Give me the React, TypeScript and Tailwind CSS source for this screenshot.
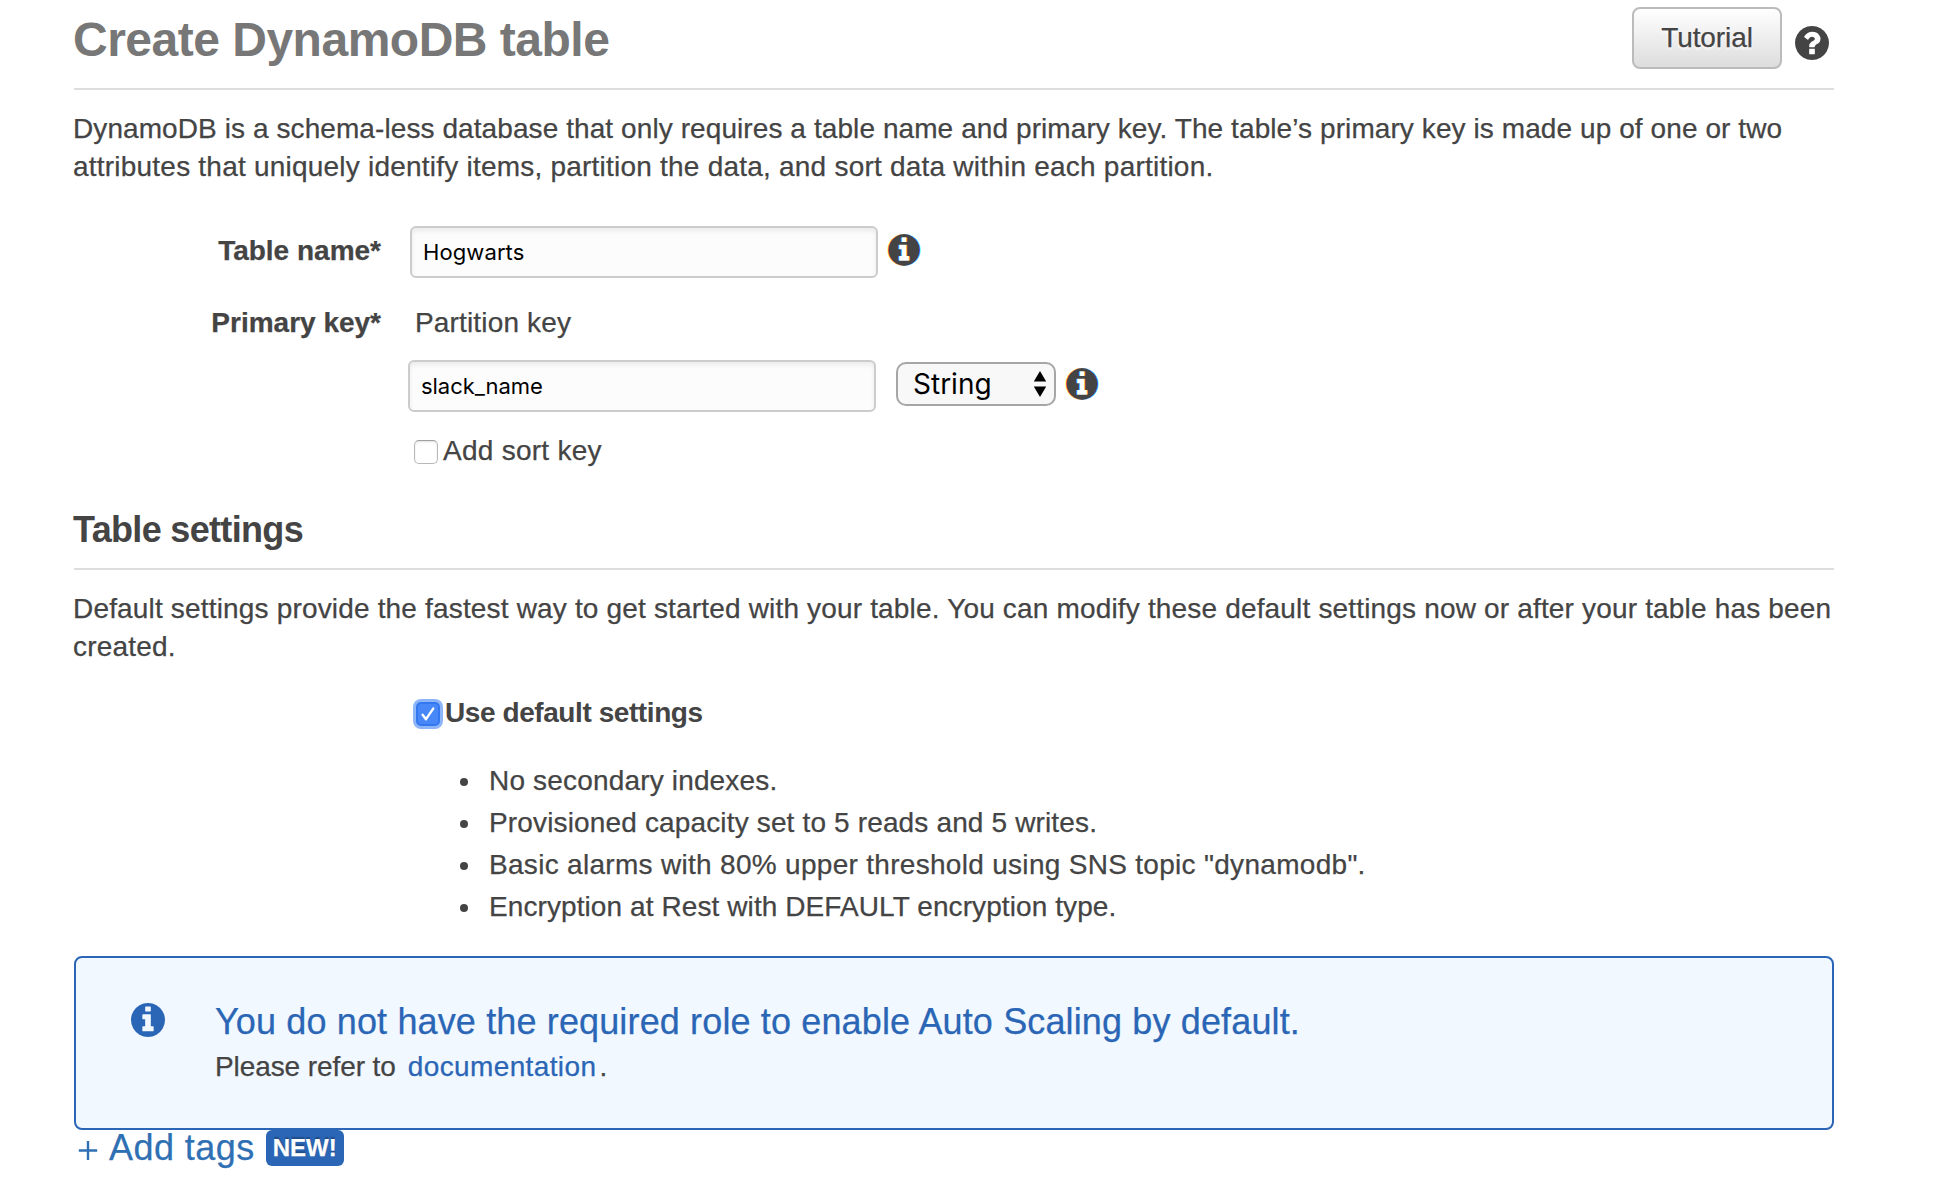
import React from "react";

const DISC =
  "M1664 896q0 209-103 385.5t-279.5 279.5-385.5 103-385.5-103-279.5-279.5-103-385.5 103-385.5 279.5-279.5 385.5-103 385.5 103 279.5 279.5 103 385.5z";
const INFO =
  "M1152 1376v-160q0-14-9-23t-23-9h-96v-512q0-14-9-23t-23-9h-320q-14 0-23 9t-9 23v160q0 14 9 23t23 9h96v320h-96q-14 0-23 9t-9 23v160q0 14 9 23t23 9h448q14 0 23-9t9-23zM1024 480v-160q0-14-9-23t-23-9h-192q-14 0-23 9t-9 23v160q0 14 9 23t23 9h192q14 0 23-9t9-23z" +
  DISC;
const QUESTION =
  "M1024 1376v-192q0-14-9-23t-23-9h-192q-14 0-23 9t-9 23v192q0 14 9 23t23 9h192q14 0 23-9t9-23zM1280 704q0-88-55.5-163t-138.5-116-170-41q-243 0-371 213-15 24 8 42l132 100q7 6 19 6 16 0 25-12 53-68 86-92 34-24 86-24 48 0 85.5 26t37.5 59q0 38-20 61t-68 45q-63 28-115.5 86.5t-52.5 125.5v36q0 14 9 23t23 9h192q14 0 23-9t9-23q0-19 21.5-49.5t54.5-49.5q32-18 49-28.5t46-35 44.5-48 28-60.5 12.5-81z" +
  DISC;

function Glyph({ d, className }: { d: string; className: string }) {
  return (
    <svg viewBox="128 128 1536 1536" className={className} fill="currentColor" fillRule="evenodd">
      <path d={d} />
    </svg>
  );
}

/* Info marker with the colour fringes of subpixel rendering on its edges. */
function FieldInfo({ className }: { className: string }) {
  return (
    <svg viewBox="128 128 1536 1536" className={`isolate size-8 shrink-0 overflow-visible ${className}`} fillRule="evenodd">
      <g className="mix-blend-multiply" fill="#44ffff" transform="translate(36 0)">
        <path d={INFO} />
      </g>
      <g className="mix-blend-multiply" fill="#ff44ff">
        <path d={INFO} />
      </g>
      <g className="mix-blend-multiply" fill="#ffff44" transform="translate(-36 0)">
        <path d={INFO} />
      </g>
    </svg>
  );
}

function Label({ children }: { children?: React.ReactNode }) {
  return <div className="w-[307px] shrink-0 whitespace-nowrap text-right font-bold">{children}</div>;
}

function TextField({ value, className }: { value: string; className: string }) {
  return (
    <input
      readOnly
      value={value}
      className={`h-[52px] w-[468px] shrink-0 rounded-[6px] border-2 border-[#cccccc] bg-[#fcfcfc] pl-[11px] font-['Inter',sans-serif] text-[22px] text-black shadow-[inset_0_3px_5px_rgba(0,0,0,0.07)] outline-none [-webkit-text-stroke:0] ${className}`}
    />
  );
}

const defaults = [
  { text: "No secondary indexes.", tracking: "tracking-[0.17px]" },
  { text: "Provisioned capacity set to 5 reads and 5 writes.", tracking: "tracking-[0.15px]" },
  { text: 'Basic alarms with 80% upper threshold using SNS topic "dynamodb".', tracking: "tracking-[0.3px]" },
  { text: "Encryption at Rest with DEFAULT encryption type.", tracking: "tracking-[0.09px]" },
];

export default function App() {
  return (
    <div className="h-[1186px] w-[1944px] overflow-hidden bg-white font-['Liberation_Sans',Arial,sans-serif] text-[28px] leading-[38px] text-[#444444] [-webkit-text-stroke:0.25px]">
      <main className="ml-[74px] flex w-[1760px] flex-col">
        <header className="flex h-[90px] items-start justify-between border-b-2 border-[#dddddd]">
          <h1 className="-ml-px mt-[12px] whitespace-nowrap text-[48px] font-bold leading-[56px] tracking-[-0.5px] text-[#777777] [-webkit-text-stroke:0]">
            Create DynamoDB table
          </h1>
          <div className="mr-[5px] mt-[7px] flex items-start">
            <button className="h-[62px] w-[150px] rounded-[8px] border-2 border-[#bbbbbb] bg-linear-to-b from-white to-[#dddddd] tracking-[-0.1px] [text-shadow:0_2px_3px_white]">
              Tutorial
            </button>
            <Glyph d={QUESTION} className="ml-[13px] mt-[19px] size-[34px] text-[#444444]" />
          </div>
        </header>

        <p className="-ml-px mt-5 whitespace-nowrap">
          <span className="block tracking-[0.085px]">
            DynamoDB is a schema-less database that only requires a table name and primary key. The table’s primary key is made up of one or two
          </span>
          <span className="block tracking-[0.22px]">
            attributes that uniquely identify items, partition the data, and sort data within each partition.
          </span>
        </p>

        <div className="mt-10 flex h-[52px] items-start">
          <div className="mt-[6px]">
            <Label>Table name*</Label>
          </div>
          <TextField value="Hogwarts" className="ml-[29px] tracking-[0.1px]" />
          <FieldInfo className="ml-[10px] mt-2" />
        </div>

        <div className="mt-[26px] flex h-[38px] items-start">
          <Label>Primary key*</Label>
          <span className="ml-[34px] whitespace-nowrap tracking-[0.16px]">Partition key</span>
        </div>

        <div className="ml-[334px] mt-[18px] flex h-[52px] items-start">
          <TextField value="slack_name" className="tracking-[-0.04px]" />
          <button className="ml-5 mt-[2px] flex h-11 w-40 items-center justify-between rounded-[10px] border-2 border-[#a6a6a6] bg-[#f8f8f8] pl-[15px] pr-[7px] font-['Inter',sans-serif] text-black [-webkit-text-stroke:0]">
            <span>String</span>
            <svg viewBox="0 0 14 28" className="h-7 w-3.5" fill="black">
              <path d="M7 1L13.2 11.5H.8zM7 27L13.2 16.5H.8z" />
            </svg>
          </button>
          <FieldInfo className="ml-[10px] mt-2" />
        </div>

        <label className="ml-[340px] mt-5 flex h-[37px] items-start whitespace-nowrap tracking-[0.26px]">
          <span className="mt-2 size-6 rounded-[5px] border border-[#b8b8b8] border-t-[#a0a0a0] bg-white shadow-[inset_0_1px_2px_rgba(0,0,0,0.12)]" />
          <span className="ml-[5px]">Add sort key</span>
        </label>

        <h2 className="mt-10 border-b-2 border-[#dddddd] pb-[17px] text-[36px] font-bold leading-[42px] [-webkit-text-stroke:0]">
          <span className="-ml-px block tracking-[-0.67px]">Table settings</span>
        </h2>

        <p className="-ml-px mt-5 whitespace-nowrap">
          <span className="block tracking-[0.17px]">
            Default settings provide the fastest way to get started with your table. You can modify these default settings now or after your table has been
          </span>
          <span className="block tracking-[0.2px]">created.</span>
        </p>

        <label className="ml-[342px] mt-7 flex h-[38px] items-start whitespace-nowrap font-bold tracking-[-0.42px] [-webkit-text-stroke:0]">
          <span className="mt-2 size-6 rounded-[5px] border-2 border-[#3478f0] bg-[#4787f7] shadow-[0_0_0_3px_#8fb5f9]">
            <svg viewBox="0 0 20 20" className="size-5" fill="none" stroke="white" strokeWidth="2.4" strokeLinecap="round" strokeLinejoin="round">
              <path d="M4.6 10.8L8 15.2L15.2 4.6" />
            </svg>
          </span>
          <span className="ml-[5px]">Use default settings</span>
        </label>

        <ul className="ml-[386px] mt-7 whitespace-nowrap leading-[42px]">
          {defaults.map((item) => (
            <li key={item.text} className={`flex items-center ${item.tracking}`}>
              <span className="mr-[21px] mt-[2px] size-2 rounded-full bg-[#444444]" />
              {item.text}
            </li>
          ))}
        </ul>

        <section className="mt-7 flex h-[174px] items-start whitespace-nowrap rounded-[8px] border-2 border-[#2a66b5] bg-[#f1f8ff]">
          <Glyph d={INFO} className="ml-[55px] mt-[45px] size-[34px] shrink-0 text-[#2a66b5]" />
          <div className="ml-[50px] mt-[43px]">
            <h3 className="text-[36px] leading-[42px] tracking-[0.14px] text-[#2a66b5]">
              You do not have the required role to enable Auto Scaling by default.
            </h3>
            <p className="mt-[5px] flex">
              <span className="tracking-[-0.09px]">Please refer to</span>
              <a className="ml-[12px] tracking-[0.38px] text-[#2a66b5]">documentation</a>
              <span className="ml-[3px]">.</span>
            </p>
          </div>
        </section>

        <div className="flex h-9 items-start whitespace-nowrap text-[36px] leading-[36px] text-[#2f70b4]">
          <svg viewBox="0 0 20 20" className="ml-[4px] mt-[10px] size-5" stroke="currentColor" strokeWidth="2.4">
            <path d="M.8 10.5H19.2M10 1V20" />
          </svg>
          <span className="ml-[11px] tracking-[0.45px]">Add tags</span>
          <span className="ml-[11px] h-9 w-[78px] rounded-[6px] bg-[#2a66b5] text-center text-[24px] font-bold text-white [text-shadow:0_-2px_1px_rgba(0,0,0,0.25)]">
            NEW!
          </span>
        </div>
      </main>
    </div>
  );
}
